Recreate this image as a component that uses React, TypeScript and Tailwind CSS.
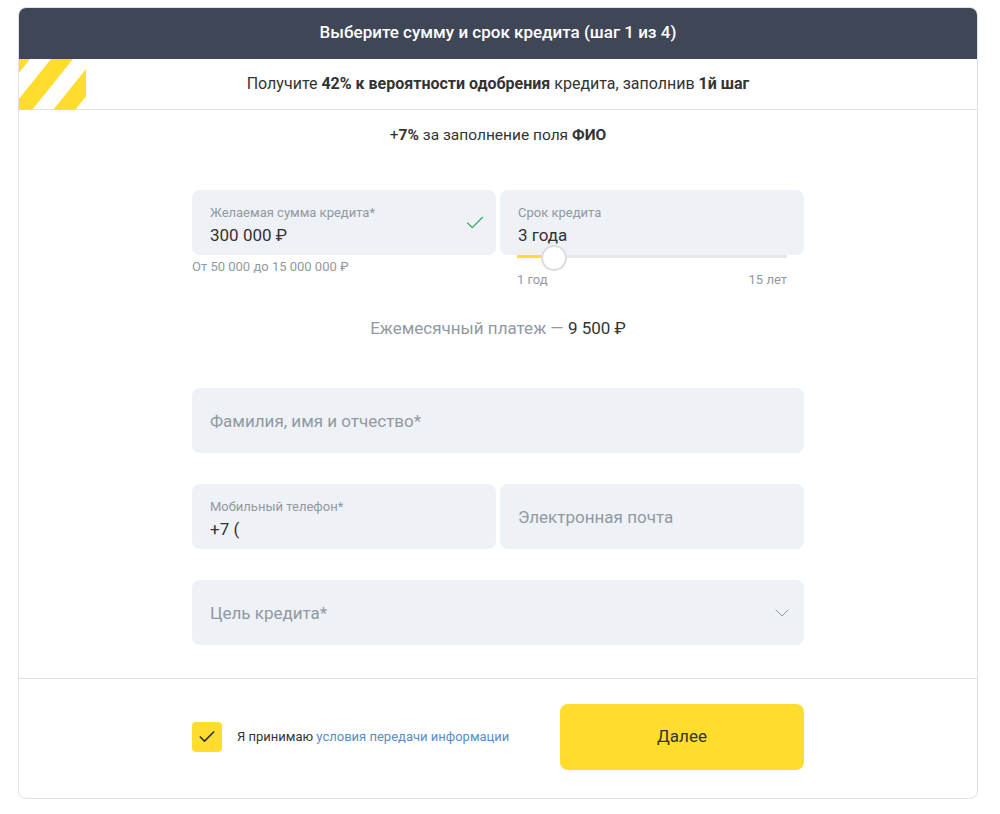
import { Check, ChevronDown } from "lucide-react";

const font = { fontFamily: "Roboto, 'Noto Sans', sans-serif" };

function Stripes() {
  // decorative yellow corner stripes on the progress banner
  return (
    <svg className="absolute left-0 top-0" width="67" height="51" viewBox="0 0 67 51">
      <polygon points="-11,0 11,0 -30,51 -52,51" fill="#ffdd2d" />
      <polygon points="32,0 54,0 13,51 -9,51" fill="#ffdd2d" />
      <polygon points="75,0 97,0 56,51 34,51" fill="#ffdd2d" />
    </svg>
  );
}

function Field({ label, value, placeholder, right }: { label?: string; value?: string; placeholder?: string; right?: React.ReactNode }) {
  return (
    <div className="relative h-[65px] rounded-lg bg-[#eef1f5] px-[18px] flex items-center">
      {placeholder ? (
        <div className="pt-[3px] text-[17px] text-[#9299a2]">{placeholder}</div>
      ) : (
        <div className="flex flex-col pt-[5px]">
          <div className="text-[13px] leading-4 text-[#9299a2]">{label}</div>
          <div className="mt-[4px] text-[17px] leading-5 text-[#333]">{value}</div>
        </div>
      )}
      {right && <div className="ml-auto flex items-center">{right}</div>}
    </div>
  );
}

export default function App() {
  return (
    <div className="bg-white min-h-[814px] pt-[7px] pl-[18px]" style={font}>
      <div className="w-[960px] rounded-lg border border-[#dfe1e4] overflow-hidden">
        <div className="h-[52px] -mx-px -mt-px bg-[#3f4757] flex items-center justify-center text-white text-[17px] font-medium">
          Выберите сумму и срок кредита (шаг 1 из 4)
        </div>

        <div className="relative h-[51px] border-b border-[#dfe1e4] flex items-center justify-center text-[16px] text-[#333]">
          <Stripes />
          <span>
            Получите <b>42% к вероятности одобрения</b> кредита, заполнив <b>1й шаг</b>
          </span>
        </div>

        <div className="pt-[15px] text-center text-[15.5px] leading-5 text-[#333]">
          +<b>7%</b> за заполнение поля <b>ФИО</b>
        </div>

        <div className="mx-auto w-[612px] mt-[45px] pb-[33px]">
          <div className="grid grid-cols-2 gap-1">
            <div>
              <Field
                label="Желаемая сумма кредита*"
                value="300 000 ₽"
                right={<Check size={22} strokeWidth={1.4} className="text-[#3fa86b] -mr-[8px]" />}
              />
              <div className="mt-[4px] text-[13px] leading-[15px] text-[#9299a2]">От 50 000 до 15 000 000 ₽</div>
            </div>
            <div>
              <Field label="Срок кредита" value="3 года" />
              <div className="relative mx-[17px] h-[3px] bg-[#e6e8eb]">
                <div className="h-[3px] w-[28px] bg-[#ffdd2d]" />
                <div className="absolute left-[24px] top-[-10px] w-[26px] h-[26px] rounded-full border-2 border-[#dcdcdc] bg-white" />
              </div>
              <div className="mx-[17px] mt-[14px] flex justify-between text-[13px] leading-4 text-[#9299a2]">
                <span>1 год</span>
                <span>15 лет</span>
              </div>
            </div>
          </div>

          <div className="mt-[30px] text-center text-[17px] leading-5 text-[#9299a2]">
            Ежемесячный платеж — <span className="text-[#333]">9 500 ₽</span>
          </div>

          <div className="mt-[50px]">
            <Field placeholder="Фамилия, имя и отчество*" />
          </div>

          <div className="mt-[31px] grid grid-cols-2 gap-1">
            <Field label="Мобильный телефон*" value="+7 (" />
            <Field placeholder="Электронная почта" />
          </div>

          <div className="mt-[31px]">
            <Field
              placeholder="Цель кредита*"
              right={<ChevronDown size={24} strokeWidth={1} className="text-[#9299a2] -mr-[8px]" />}
            />
          </div>
        </div>

        <div className="border-t border-[#dfe1e4] pt-[25px] pb-[28px]">
          <div className="mx-auto w-[612px] flex items-center justify-between">
            <div className="flex items-center">
              <div className="w-[30px] h-[30px] rounded bg-[#ffdd2d] flex items-center justify-center">
                <Check size={20} strokeWidth={2} className="text-[#333]" />
              </div>
              <span className="ml-[15px] text-[13px] text-[#333]">
                Я принимаю <span className="text-[#5a8dc8]">условия передачи информации</span>
              </span>
            </div>
            <button className="w-[244px] h-[66px] rounded-lg bg-[#ffdd2d] text-[17px] text-[#333]">Далее</button>
          </div>
        </div>
      </div>
    </div>
  );
}
